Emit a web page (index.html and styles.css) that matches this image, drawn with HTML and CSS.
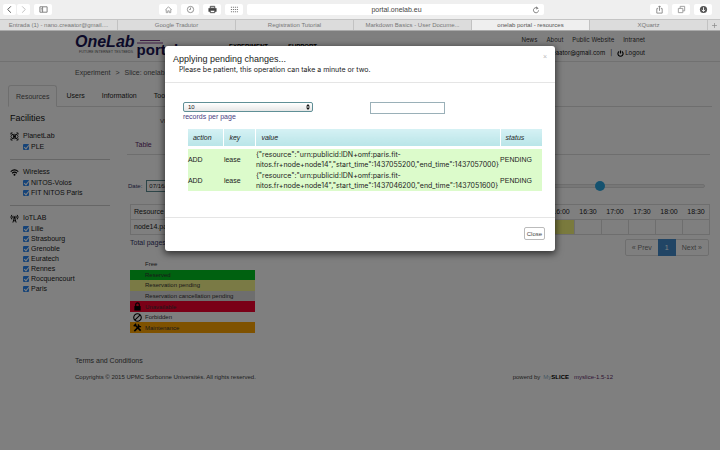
FILE: index.html
```html
<!DOCTYPE html>
<html lang="en">
<head>
<meta charset="utf-8">
<title>onelab portal - resources</title>
<link rel="stylesheet" href="styles.css">
</head>
<body>
<div class="toolbar">
  <div class="tool-group nav-tools">
    <div class="pair">
      <button class="tool" aria-label="Back"><svg viewBox="0 0 10 10"><path d="M6.5 1.5 3 5l3.500 3.500" stroke="#444"/></svg></button>
      <button class="tool" aria-label="Forward"><svg viewBox="0 0 10 10"><path d="M3.500 1.500 7 5 3.500 8.500" stroke="#bbb"/></svg></button>
    </div>
    <button class="tool" aria-label="Sidebar"><svg viewBox="0 0 10 10"><path d="M1 2h8v6H1zM4 2v6M2 4h1M2 5.500h1" stroke="#777"/></svg></button>
  </div>
  <div class="tool-group">
    <button class="tool" aria-label="Home"><svg viewBox="0 0 10 10"><path d="M1.500 5.500 5 2l3.500 3.500M2.500 5v3.500h1.700V6.500h1.600v2h1.700V5" stroke="#999"/></svg></button>
    <button class="tool" aria-label="History"><svg viewBox="0 0 10 10"><circle cx="5" cy="5" r="3.500" stroke="#888"/><path d="M5 2.800V5H3.500" stroke="#888"/></svg></button>
    <button class="tool" aria-label="Print"><svg viewBox="0 0 10 10"><path d="M2.500 1.500h5v2h-5z" stroke="#444"/><path d="M.5 3.500h9v4h-9z" fill="#444"/><path d="M2.500 5.800h5v2.700h-5z" fill="#fff" stroke="#444"/></svg></button>
    <button class="tool" aria-label="Top sites"><svg viewBox="0 0 10 10"><path d="M1 2.500h8M1 5h8M1 7.500h8" stroke="#777" stroke-width="1.200" stroke-dasharray="1.200 1"/></svg></button>
  </div>
  <div class="address"><span>portal.onelab.eu</span><button class="reload" aria-label="Reload"><svg viewBox="0 0 10 10"><path d="M7.800 3.700A3.200 3.200 0 1 0 8.200 5.500M5 1l2 1.500L5 4" stroke="#666"/></svg></button></div>
  <div class="tool-group end-tools">
    <button class="tool" aria-label="Share"><svg viewBox="0 0 10 10"><path d="M3.500 4h-1.500v5h6V4H6.500M5 6.500V1M3.500 2.500 5 1l1.500 1.500" stroke="#888"/></svg></button>
    <button class="tool" aria-label="Show tabs"><svg viewBox="0 0 10 10"><path d="M1.500 3.800h5v4.700h-5zM3.500 3.800V1.500h5v5h-2" stroke="#999"/></svg></button>
    <button class="tool" aria-label="Downloads"><svg viewBox="0 0 10 10"><circle cx="5" cy="5" r="4" fill="#555"/><path d="M5 2.500v4.500M3.200 5.300 5 7.200l1.800-1.900" stroke="#fff"/></svg></button>
  </div>
</div>
<nav class="browser-tabs">
  <a href="#">Entrada (1) - nano.creaator@gmail....</a>
  <a href="#">Google Tradutor</a>
  <a href="#">Registration Tutorial</a>
  <a href="#">Markdown Basics - User Docume...</a>
  <a href="#" class="active">onelab portal - resources</a>
  <a href="#">XQuartz</a>
  <button class="new-tab" aria-label="New tab"><svg viewBox="0 0 10 10"><path d="M5 1.500v7M1.500 5h7" stroke="#888"/></svg></button>
</nav>

<div class="viewport">
  <header class="site-header">
    <a class="logo" href="#">
      <span class="logo-one"><b>OneLab</b><small>FUTURE INTERNET TESTBEDS</small></span>
      <span class="logo-portal"><svg class="swoosh" viewBox="0 0 26 4"><path d="M3 .5h20M0 3h26" stroke="#7a3a86" fill="none"/></svg><b>portal</b></span>
    </a>
    <nav class="site-menu"><a href="#">EXPERIMENT</a><a href="#">SUPPORT</a></nav>
    <div class="account">
      <nav class="links"><a href="#">News</a><a href="#">About</a><a href="#">Public Website</a><a href="#">Intranet</a></nav>
      <div class="user"><span>nano.creaator@gmail.com</span><span>|</span><a href="#"><svg viewBox="0 0 10 10"><path d="M3 2.200a3.700 3.700 0 1 0 4 0M5 .8V5" stroke="#000" stroke-width="1.600" fill="none"/></svg>Logout</a></div>
    </div>
  </header>

  <div class="breadcrumb"><a href="#">Experiment</a><span>&gt;</span><span>Slice: onelab.u</span></div>

  <nav class="tabs"><a href="#" class="active">Resources</a><a href="#">Users</a><a href="#">Information</a><a href="#">Tools</a></nav>

  <div class="columns">
    <aside class="facilities">
      <h2>Facilities</h2>
      <section>
        <h3><svg viewBox="0 0 10 10"><path d="M1 3V1h2M7 1h2v2M9 7v2H7M3 9H1V7M1.500 1.500l7 7M8.500 1.500l-7 7" stroke="#000" stroke-width=".8"/><ellipse cx="5" cy="5" rx="4" ry="2.500" stroke="#000" stroke-width=".8"/><circle cx="5" cy="5" r="1.500" fill="#000"/></svg>PlanetLab</h3>
        <label><input type="checkbox" checked>PLE</label>
      </section>
      <section>
        <h3><svg viewBox="0 0 10 10"><path d="M.8 4Q5 .3 9.200 4M2.400 5.800Q5 3.500 7.600 5.800" stroke="#000" stroke-width="1.300"/><circle cx="5" cy="7.500" r="1.100" fill="#000"/></svg>Wireless</h3>
        <label><input type="checkbox" checked>NITOS-Volos</label>
        <label><input type="checkbox" checked>FIT NITOS Paris</label>
      </section>
      <section>
        <h3><svg viewBox="0 0 10 10"><path d="M2 1Q0 3.500 2 6M8 1q2 2.500 0 5M3.500 2q-1 1.500 0 3M6.500 2q1 1.500 0 3M5 3.500 3.200 9.500M5 3.500l1.800 6M3.800 7.500h2.400" stroke="#000"/><circle cx="5" cy="3.500" r="1" fill="#000"/></svg>IoTLAB</h3>
        <label><input type="checkbox" checked>Lille</label>
        <label><input type="checkbox" checked>Strasbourg</label>
        <label><input type="checkbox" checked>Grenoble</label>
        <label><input type="checkbox" checked>Euratech</label>
        <label><input type="checkbox" checked>Rennes</label>
        <label><input type="checkbox" checked>Rocquencourt</label>
        <label><input type="checkbox" checked>Paris</label>
      </section>
    </aside>

    <main>
      <div class="view-name">VIEW</div>
      <div class="view-tabs"><a href="#">Table</a></div>
      <div class="filters">
        <label for="date">Date:</label><input id="date" type="text" value="07/16/2015">
        <input class="range" type="range" min="0" max="100" value="33" aria-label="Time">
      </div>
      <table class="schedule">
        <thead><tr><th class="name">Resource</th><th class="filler"></th><th>16:00</th><th>16:30</th><th>17:00</th><th>17:30</th><th>18:00</th><th>18:30</th></tr></thead>
        <tbody><tr><td class="name">node14.paris</td><td class="filler"></td><td class="pending"></td><td></td><td></td><td></td><td></td><td></td></tr></tbody>
      </table>
      <div class="paging">
        <span>Total pages: 1</span>
        <nav><a href="#">« Prev</a><a href="#" class="active">1</a><a href="#">Next »</a></nav>
      </div>
      <ul class="legend">
        <li>Free</li>
        <li class="reserved">Reserved</li>
        <li class="waiting">Reservation pending</li>
        <li class="cancelling">Reservation cancellation pending</li>
        <li class="unavailable"><svg viewBox="0 0 10 10"><path d="M3 5V3a2 2 0 0 1 4 0v2" stroke="#000" stroke-width="1.300"/><path d="M1.500 4.500h7V9.500h-7z" fill="#000"/></svg>Unavailable</li>
        <li><svg viewBox="0 0 10 10"><circle cx="5" cy="5" r="4.200" stroke="#000" stroke-width="1.200"/><path d="m2 8 6-6" stroke="#000" stroke-width="1.200"/></svg>Forbidden</li>
        <li class="maintenance"><svg viewBox="0 0 10 10"><path d="m1.500 9 6-6M2 2l6.500 6.500" stroke="#000" stroke-width="1.800"/><path d="M6 1.500v2.500h3M.8 3.500 3.500.8" stroke="#000" stroke-width="1.500"/></svg>Maintenance</li>
      </ul>
    </main>
  </div>

  <footer class="site-footer">
    <a href="#">Terms and Conditions</a>
    <div class="credits"><span>Copyrights © 2015 UPMC Sorbonne Universités. All rights reserved.</span>
      <span class="powered">powerd by <span class="myslice"><i>My</i><b>SLICE</b></span><a href="#">myslice-1.5-12</a></span></div>
  </footer>

  <div class="backdrop">
    <div class="dialog" role="dialog" aria-labelledby="dialog-title">
      <div class="dialog-head">
        <div><h1 id="dialog-title">Applying pending changes...</h1><p>Please be patient, this operation can take a minute or two.</p></div>
        <button class="dismiss" aria-label="Dismiss">×</button>
      </div>
      <div class="dialog-body">
        <div class="controls">
          <div class="length"><div class="select-wrap"><select id="length"><option>10</option></select><svg viewBox="0 0 4 6"><path d="M2 0 4 2.400H0zM2 6 0 3.600h4z" fill="#111"/></svg></div><label for="length">records per page</label></div>
          <input class="search" type="text" aria-label="Search">
        </div>
        <table class="changes">
          <thead><tr><th>action</th><th>key</th><th>value</th><th>status</th></tr></thead>
          <tbody>
            <tr><td>ADD</td><td>lease</td><td class="value">{"resource":"urn:publicid:IDN+omf:paris.fit-<br>nitos.fr+node+node14","start_time":1437055200,"end_time":1437057000}</td><td>PENDING</td></tr>
            <tr><td>ADD</td><td>lease</td><td class="value">{"resource":"urn:publicid:IDN+omf:paris.fit-<br>nitos.fr+node+node14","start_time":1437046200,"end_time":1437051600}</td><td>PENDING</td></tr>
          </tbody>
        </table>
      </div>
      <div class="dialog-foot"><button class="close">Close</button></div>
    </div>
  </div>
</div>
</body>
</html>
```
FILE: styles.css
```css
* { box-sizing: border-box; }
body {
  margin: 0;
  min-height: 100vh;
  display: flex;
  flex-direction: column;
  font: 7px/10px "Liberation Sans", Arial, sans-serif;
  color: #222;
  background: #fff;
}
a { color: inherit; text-decoration: none; }
button, input, select { font: inherit; color: inherit; margin: 0; padding: 0; border: 0; }
h1, h2, h3, p, ul { margin: 0; padding: 0; font-weight: normal; }
svg { display: block; fill: none; flex: none; }

/* browser chrome */
.toolbar { display: flex; align-items: center; gap: 4px; height: 19px; padding: 0 8px 0 3px; background: #efefef; }
.tool-group { display: flex; gap: 4px; }
.nav-tools { width: 152px; }
.pair { display: flex; gap: 1px; }
.pair .tool { width: 13px; }
.tool { display: flex; align-items: center; justify-content: center; width: 18px; height: 11px; border-radius: 2px; background: #fff; }
.tool svg { width: 9px; height: 9px; }
.address { flex: 1; display: flex; align-items: center; height: 11px; padding-left: 14px; border-radius: 2px; background: #fff; color: #444; }
.address span { flex: 1; text-align: center; }
.reload { width: 12px; background: none; }
.reload svg { width: 8px; height: 8px; }
.end-tools { padding-left: 102px; }
.browser-tabs { display: flex; height: 12px; border-top: 1px solid #c4c4c4; border-bottom: 1px solid #aaa; background: #dcdcdc; font-size: 6px; color: #777; }
.browser-tabs a { flex: 1; text-align: center; border-right: 1px solid #c2c2c2; white-space: nowrap; overflow: hidden; }
.browser-tabs .active { background: #efefef; color: #555; }
.new-tab { width: 12px; background: none; display: flex; align-items: center; justify-content: center; }
.new-tab svg { width: 7px; height: 7px; }

/* site */
.viewport { flex: 1; position: relative; }
.site-header { display: flex; height: 31px; padding: 0 75px; border-bottom: 1px solid #e3e3e3; }
.logo { display: flex; width: 106px; gap: 2px; color: #191552; }
.logo-one { display: flex; flex-direction: column; padding-top: 2px; }
.logo-one b { font-size: 16px; line-height: 17px; font-style: italic; }
.logo-one small { font: 4px/4px Roboto, sans-serif; padding-left: 4px; color: #666; }
.logo-portal { display: flex; flex-direction: column; padding-top: 9px; }
.logo-portal b { font-size: 15px; line-height: 12px; }
.swoosh { width: 26px; height: 4px; }
.site-menu { display: flex; gap: 20px; padding: 10px 0 0 48px; font-size: 6px; font-weight: bold; color: #000; }
.account { margin-left: auto; padding-top: 4px; display: flex; flex-direction: column; align-items: flex-end; gap: 3px; }
.links, .user { font: 6px/10px Inter, "Liberation Sans", sans-serif; }
.links { display: flex; gap: 9px; color: #333; }
.user { display: flex; gap: 5px; color: #111; }
.user a { display: flex; align-items: center; gap: 1px; }
.user svg { width: 7px; height: 7px; }
.breadcrumb { display: flex; gap: 5px; padding: 6px 75px 7px; color: #555; }
.tabs { display: flex; height: 22px; margin: 0 8px; border-bottom: 1px solid #ddd; line-height: 21px; }
.tabs a { padding: 0 8px; margin-right: 1px; }
.tabs .active { height: 22px; padding: 0 7px; border: 1px solid #ddd; border-bottom-color: #fff; border-radius: 3px 3px 0 0; color: #555; background: #fff; }
.columns { display: flex; gap: 17px; padding: 5px 10px 0; }
.facilities { width: 100px; flex: none; }
.facilities h2 { font-size: 9px; line-height: 12px; color: #111; }
.facilities section { padding: 6px 0 7px; border-bottom: 1px solid #ccc; }
.facilities section:last-child { border: 0; }
.facilities h3 { display: flex; align-items: center; gap: 4px; font-size: 7px; line-height: 12px; }
.facilities h3 svg { width: 9px; height: 9px; }
.facilities label { display: flex; align-items: center; gap: 2px; padding-left: 13px; }
.facilities input { appearance: none; position: relative; width: 6px; height: 6px; border-radius: 1px; background: #2b87f0; }
.facilities input:checked::after { content: ""; position: absolute; left: 2px; top: 0; width: 2px; height: 4px; border: solid #fff; border-width: 0 1px 1px 0; transform: rotate(40deg); }
main { flex: 1; min-width: 0; }
.view-name { padding: 4px 33px 0; font-size: 6px; color: #555; }
.view-tabs { padding: 14px 8px 4px; border-bottom: 1px solid #ddd; color: #60276a; }
.filters { display: flex; align-items: center; gap: 4px; padding: 25px 0 0 1px; font-size: 6px; color: #333368; }
.filters #date { width: 54px; height: 12px; padding-left: 2px; border: 1px solid #5a8a90; color: #222; background: #fff; }
.range { appearance: none; flex: 1; margin: 0 5px 0 auto; height: 4px; max-width: 160px; border-radius: 2px; background: #eee; border: 1px solid #ddd; }
.range::-webkit-slider-thumb { appearance: none; width: 10px; height: 10px; border-radius: 50%; background: #2aa5de; }
.schedule { width: calc(100% - 3px); margin: 12px 0 0 3px; border-collapse: collapse; table-layout: fixed; }
.schedule th, .schedule td { width: 27px; height: 15px; padding: 0; border: 1px solid #ddd; text-align: center; font-weight: normal; }
.schedule th { border-color: #ddd transparent; }
.schedule th:first-child { border-left-color: #ddd; }
.schedule th:last-child { border-right-color: #ddd; }
.schedule .name { width: 70px; padding-left: 3px; text-align: left; white-space: nowrap; }
.schedule .filler { width: auto; }
.schedule .pending { background: #f5f57a; }
.paging { display: flex; justify-content: space-between; align-items: flex-start; padding: 3px 1px 0 3px; color: #333368; }
.paging nav { display: flex; border: 1px solid #ddd; border-radius: 2px; line-height: 15px; color: #777; margin-top: 1px; }
.paging nav a { padding: 0 6px; }
.paging nav .active { padding: 0 7px; margin: -1px 0; line-height: 17px; background: #428bca; color: #fff; }
.legend { display: grid; grid-template-rows: repeat(7, 1fr); width: 125px; height: 74px; margin: 3px 0 0 3px; list-style: none; font-size: 6px; color: #333; }
.legend li { position: relative; display: flex; align-items: center; padding-left: 15px; line-height: 10px; }
.legend svg { position: absolute; left: 3px; width: 9px; height: 9px; }
.reserved { background: #00c221; }
.waiting { background: #f5f58a; }
.cancelling { background: #ddd; }
.unavailable { background: #f5002f; }
.maintenance { background: #ffa500; }
.site-footer { padding: 23px 75px 0; color: #444; }
.credits { display: flex; justify-content: space-between; padding-top: 6px; font-size: 6px; }
.powered { display: flex; gap: 3px; padding-right: 32px; }
.powered a { color: #60276a; padding-left: 2px; }
.myslice i { font-style: normal; color: #8fb4c8; }
.myslice b { color: #000; }

/* dialog */
.backdrop { position: absolute; inset: 0; display: flex; justify-content: center; align-items: flex-start; padding-top: 15px; background: rgba(0, 0, 0, .5); }
.dialog { width: 54.2%; border-radius: 3px; background: #fff; box-shadow: 0 2px 7px 1px rgba(0, 0, 0, .6); }
.dialog-head { display: flex; justify-content: space-between; padding: 8px 8px 7px; border-bottom: 1px solid #e5e5e5; }
.dialog-head h1 { font-size: 9px; line-height: 11px; color: #222; }
.dialog-head p { padding-left: 6px; }
.dialog-head p, .changes .value { font-family: Inter, "Liberation Sans", sans-serif; }
.dismiss { height: 6px; line-height: 6px; background: none; color: #bbb; }
.dialog-body { padding: 19px 13px 26px 18px; }
.controls { display: flex; align-items: flex-start; gap: 57px; height: 27px; }
.length { width: 130px; color: #493e82; }
.length label { display: block; }
.select-wrap { position: relative; height: 10px; }
.length select { appearance: none; display: block; width: 100%; height: 10px; padding-left: 4px; border: 1px solid #5f8f96; border-radius: 2px; background: linear-gradient(#fff, #e6e6e6); font-size: 6px; line-height: 8px; color: #222; }
.select-wrap svg { position: absolute; right: 3px; top: 2px; width: 4px; height: 6px; }
.search { width: 75px; height: 12px; border: 1px solid #9ab0b8; background: #fff; }
.changes { width: calc(100% - 5px); margin-left: 5px; border-collapse: collapse; table-layout: fixed; }
.changes th { height: 17px; padding: 0 0 0 5px; border-right: 1px solid #fff; background: linear-gradient(#d5f1f4, #b9e5e8); font-weight: normal; font-style: italic; text-align: left; }
.changes th:nth-child(1) { width: 36px; }
.changes th:nth-child(2) { width: 32px; }
.changes th:nth-child(4) { width: 42px; border: 0; }
.changes thead::after { content: ""; display: block; height: 3px; }
.changes td { height: 21px; padding: 0; background: #dcfbcb; white-space: nowrap; }
.dialog-foot { display: flex; justify-content: flex-end; padding: 9px 10px 11px; border-top: 1px solid #e5e5e5; }
.close { height: 13px; padding: 0 2px; border: 1px solid #bbb; border-radius: 2px; background: #fff; font-size: 6px; color: #444; }
```
